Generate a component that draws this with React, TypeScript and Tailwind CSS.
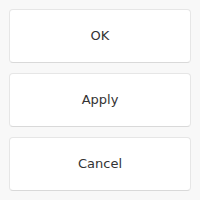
export default function App() {
  const labels = ['OK', 'Apply', 'Cancel'];
  return (
    <div className="w-[200px] h-[200px] bg-[#f8f8f8] p-[9px] flex flex-col gap-[10px]" style={{ fontFamily: '"DejaVu Sans", sans-serif' }}>
      {labels.map((label) => (
        <button
          key={label}
          className="h-[54px] w-full bg-white border border-[#e6e6e6] border-b-[#d9d9d9] rounded-[4px] text-[13px] text-[#333333] flex items-center justify-center"
        >
          {label}
        </button>
      ))}
    </div>
  );
}
